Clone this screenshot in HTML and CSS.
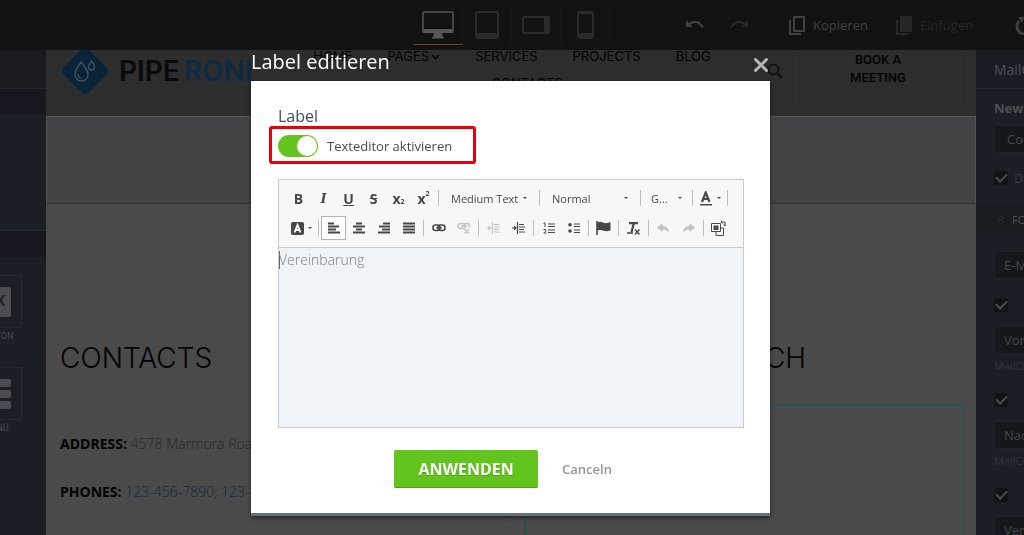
FILE: index.html
```html
<!DOCTYPE html>
<html lang="de">
<head>
    <meta charset="UTF-8">
    <meta name="viewport" content="width=device-width, initial-scale=1.0">
    <title>Label editieren</title>
    <link rel="stylesheet" href="styles.css">
</head>
<body>
    <div class="app">
        <header class="topbar">
            <div class="devices">
                <button class="device active" aria-label="Desktop">
                    <svg width="32" height="28" viewBox="0 0 32 28"><path d="M2 1h28q1 0 1 1v18q0 1-1 1H2q-1 0-1-1V2q0-1 1-1z" fill="none" stroke="currentColor" stroke-width="1.5"/><path d="M1 18h30v4H1zM12 22h8l1 4h1v1.500H10V26h1z" fill="currentColor"/></svg>
                </button>
                <button class="device" aria-label="Tablet">
                    <svg width="24" height="28" viewBox="0 0 24 28"><rect x="1" y="1" width="22" height="26" rx="2" fill="none" stroke="currentColor" stroke-width="2"/><path d="M1 22h22v5H1z" fill="currentColor"/></svg>
                </button>
                <button class="device" aria-label="Tablet quer">
                    <svg width="28" height="18" viewBox="0 0 28 18"><rect x="1" y="1" width="26" height="16" rx="1" fill="none" stroke="currentColor" stroke-width="2"/><path d="M22 1h5v16h-5z" fill="currentColor"/></svg>
                </button>
                <button class="device" aria-label="Telefon">
                    <svg width="17" height="28" viewBox="0 0 17 28"><rect x="1" y="1" width="15" height="26" rx="2" fill="none" stroke="currentColor" stroke-width="2"/><path d="M1 22h15v5H1zM1 1h15v2H1z" fill="currentColor"/></svg>
                </button>
            </div>
            <div class="history">
                <button class="history-btn" aria-label="Rückgängig">
                    <svg width="20" height="14" viewBox="0 0 20 14"><path d="M1 2v7h7L5.500 6.500Q12 2 17 10l2-1Q13-1 4 5z" fill="currentColor"/></svg>
                </button>
                <button class="history-btn off" aria-label="Wiederholen">
                    <svg width="20" height="14" viewBox="0 0 20 14"><path d="M19 2v7h-7l2.500-2.500Q8 2 3 10L1 9Q7-1 16 5z" fill="currentColor"/></svg>
                </button>
            </div>
            <button class="copy">
                <svg width="16" height="19" viewBox="0 0 16 19"><path d="M5 1h10v14H5zM1 4v14h11" fill="none" stroke="currentColor" stroke-width="2"/></svg>
                Kopieren
            </button>
            <button class="copy off">
                <svg width="16" height="19" viewBox="0 0 16 19"><path d="M4 0h12v16H4z" fill="currentColor"/><path d="M1 4v14h11" fill="none" stroke="currentColor" stroke-width="2"/></svg>
                Einfügen
            </button>
            <button class="reload" aria-label="Neu laden">
                <svg width="20" height="20" viewBox="0 0 20 20"><path d="M4 6a8 8 0 1 0 12 0" fill="none" stroke="currentColor" stroke-width="3"/><path d="M3 2l6 0-2 6z" fill="currentColor"/></svg>
            </button>
        </header>

        <aside class="left-panel">
            <div class="panel-title"></div>
            <div class="panel-band"></div>
            <div class="panel-space"></div>
            <div class="panel-band second"></div>
            <div class="tiles">
                <div class="tile">
                    <div class="tile-box"><span class="tile-ok">OK</span></div>
                    <span class="tile-name">BUTTON</span>
                </div>
                <div class="tile">
                    <div class="tile-box"><span class="tile-bars"><i></i><i></i><i></i></span></div>
                    <span class="tile-name">MENÜ</span>
                </div>
            </div>
        </aside>

        <main class="site">
            <div class="site-header">
                <a class="logo" href="#">
                    <svg width="46" height="46" viewBox="0 0 46 46"><path d="M20 1q3-2 6 0l19 19q2 3 0 6L26 45q-3 2-6 0L1 26q-2-3 0-6z" fill="#07243b"/><path d="M19 14q-6 8-6 12.500a6.500 6.500 0 0 0 13 0Q26 22 19 14zM16 26q0 4 3.500 4M29.500 13q-3 4-3 6a3 3 0 0 0 6 0q0-2-3-6z" fill="none" stroke="#4b5459" stroke-width="1.300"/></svg>
                    <span class="logo-dark">PIPE</span>
                    <span class="logo-blue">RONI</span>
                </a>
                <nav class="site-nav">
                    <a href="#">HOME</a>
                    <a href="#" class="has-menu">PAGES<svg width="9" height="6" viewBox="0 0 9 6"><path d="M1 1l3.500 3.500L8 1" fill="none" stroke="currentColor" stroke-width="1.500"/></svg></a>
                    <a href="#">SERVICES</a>
                    <a href="#">PROJECTS</a>
                    <a href="#">BLOG</a>
                    <a href="#" class="contacts-link">CONTACTS</a>
                </nav>
                <svg class="search" width="16" height="16" viewBox="0 0 16 16"><circle cx="6.500" cy="6.500" r="5" fill="none" stroke="currentColor" stroke-width="2"/><path d="M10 10l5 5" stroke="currentColor" stroke-width="2.500"/></svg>
                <a class="meeting" href="#">BOOK A<br>MEETING</a>
            </div>
            <div class="hero"></div>
            <div class="columns">
                <section class="column">
                    <div class="divider"></div>
                    <h2>CONTACTS</h2>
                    <p><b>ADDRESS:</b> 4578 Marmora Road</p>
                    <p><b>PHONES:</b> <a href="#">123-456-7890; 123-456-7891</a></p>
                </section>
                <section class="column touch">
                    <h2>GET IN TOUCH</h2>
                    <div class="form-frame"></div>
                </section>
            </div>
        </main>

        <aside class="right-panel">
            <div class="settings">
                <h3>MailChimp</h3>
                <div class="newsletter">
                    <h4>Newsletter</h4>
                    <button class="field raised">Contacts</button>
                    <label class="check"><input type="checkbox" checked>Doppelt</label>
                </div>
                <div class="fields-title"><svg width="8" height="8" viewBox="0 0 8 8"><path d="M1 4l3-3 3 3M1 7l3-3 3 3" fill="none" stroke="currentColor"/></svg>FORMULAR</div>
                <div class="fields">
                    <input class="field" type="text" value="E-Mail" aria-label="E-Mail">
                    <input class="tick" type="checkbox" checked aria-label="Vorname anzeigen">
                    <input class="field" type="text" value="Vorname" aria-label="Vorname">
                    <small>MailChimp</small>
                    <input class="tick" type="checkbox" checked aria-label="Nachname anzeigen">
                    <input class="field" type="text" value="Nachname" aria-label="Nachname">
                    <small>MailChimp</small>
                    <input class="tick" type="checkbox" checked aria-label="Label anzeigen">
                    <input class="field" type="text" value="Vereinbarung" aria-label="Vereinbarung">
                </div>
            </div>
        </aside>
    </div>

    <div class="overlay">
        <div class="modal" role="dialog" aria-labelledby="modal-title">
            <div class="modal-header">
                <h1 id="modal-title">Label editieren</h1>
                <button class="close" aria-label="Schließen">
                    <svg width="14" height="14" viewBox="0 0 14 14"><path d="M1.500 1.500l11 11M12.500 1.500l-11 11" stroke="currentColor" stroke-width="3" stroke-linecap="round"/></svg>
                </button>
            </div>
            <form class="modal-body">
                <div class="label">Label</div>
                <div class="highlight">
                    <label class="switch"><input type="checkbox" checked>Texteditor aktivieren</label>
                </div>
                <div class="editor">
                    <div class="toolbar">
                        <div class="tool-row">
                            <div class="group">
                                <button type="button" class="tool bold" aria-label="Fett">B</button>
                                <button type="button" class="tool italic" aria-label="Kursiv">I</button>
                                <button type="button" class="tool underline" aria-label="Unterstrichen">U</button>
                                <button type="button" class="tool strike" aria-label="Durchgestrichen">S</button>
                                <button type="button" class="tool script" aria-label="Tiefgestellt">x<sub>2</sub></button>
                                <button type="button" class="tool script" aria-label="Hochgestellt">x<sup>2</sup></button>
                            </div>
                            <div class="group"><span class="combo"><select aria-label="Stil"><option>Medium Text</option></select></span></div>
                            <div class="group"><span class="combo"><select aria-label="Format"><option>Normal</option></select></span></div>
                            <div class="group"><span class="combo small"><select aria-label="Größe"><option>G...</option></select></span></div>
                            <div class="group last">
                                <button type="button" class="tool color" aria-label="Textfarbe">
                                    <svg width="14" height="15" viewBox="0 0 14 15"><path d="M3 11L6.700 1.500 10.500 11M4 8h5.500" fill="none" stroke="currentColor" stroke-width="2.200"/><path d="M1 13h12v1.500H1z" fill="currentColor"/></svg>
                                </button>
                            </div>
                        </div>
                        <div class="tool-row">
                            <div class="group">
                                <button type="button" class="tool color" aria-label="Hintergrundfarbe">
                                    <svg width="13" height="13" viewBox="0 0 13 13"><rect width="13" height="13" rx="2" fill="currentColor"/><path d="M3.500 10.500L6.500 3l3 7.500M4.500 8h4" fill="none" stroke="#fff" stroke-width="1.800"/></svg>
                                </button>
                            </div>
                            <div class="group">
                                <button type="button" class="tool active" aria-label="Linksbündig"><svg width="12" height="12" viewBox="0 0 12 12"><path d="M0 1.500h6M0 4.500h11M0 7.500h8M0 10.500h12" stroke="currentColor" stroke-width="1.800"/></svg></button>
                                <button type="button" class="tool" aria-label="Zentriert"><svg width="12" height="12" viewBox="0 0 12 12"><path d="M3 1.500h6M0 4.500h12M3 7.500h6M0 10.500h12" stroke="currentColor" stroke-width="1.800"/></svg></button>
                                <button type="button" class="tool" aria-label="Rechtsbündig"><svg width="12" height="12" viewBox="0 0 12 12"><path d="M5 1.500h7M1 4.500h11M4 7.500h8M0 10.500h12" stroke="currentColor" stroke-width="1.800"/></svg></button>
                                <button type="button" class="tool" aria-label="Blocksatz"><svg width="12" height="12" viewBox="0 0 12 12"><path d="M0 1.500h12M0 4.500h12M0 7.500h12M0 10.500h12" stroke="currentColor" stroke-width="1.800"/></svg></button>
                            </div>
                            <div class="group">
                                <button type="button" class="tool" aria-label="Link"><svg width="14" height="8" viewBox="0 0 14 8"><rect x="1" y="1" width="7" height="5.500" rx="2.500" fill="none" stroke="currentColor" stroke-width="1.600"/><rect x="6" y="1" width="7" height="5.500" rx="2.500" fill="none" stroke="currentColor" stroke-width="1.600"/><path d="M4 3.800h6" stroke="currentColor" stroke-width="1.200"/></svg></button>
                                <button type="button" class="tool" disabled aria-label="Link entfernen"><svg width="14" height="12" viewBox="0 0 14 12"><rect x="1" y="1.500" width="7" height="5" rx="2.500" fill="none" stroke="currentColor" stroke-width="1.400"/><path d="M7 2q2-1 4-.5 2 1 1 4M4 4h6M7.500 7l4.500 4.500M12 7l-4.500 4.500" fill="none" stroke="currentColor" stroke-width="1.400"/></svg></button>
                            </div>
                            <div class="group">
                                <button type="button" class="tool" disabled aria-label="Einzug verkleinern"><svg width="13" height="12" viewBox="0 0 13 12"><path d="M5.500 0v12M7 2.500h5M7 5h6M7 7.500h5M7 10h6M2 6h3" stroke="currentColor"/><path d="M0 6l3-2.500v5z" fill="currentColor"/></svg></button>
                                <button type="button" class="tool" aria-label="Einzug vergrößern"><svg width="13" height="12" viewBox="0 0 13 12"><path d="M5.500 0v12M7 2.500h5M7 5h6M7 7.500h5M7 10h6M0 6h3" stroke="currentColor" stroke-width="1.200"/><path d="M5 6L2 3.500v5z" fill="currentColor"/></svg></button>
                            </div>
                            <div class="group">
                                <button type="button" class="tool" aria-label="Nummerierte Liste"><svg width="12" height="12" viewBox="0 0 12 12"><path d="M5 2h7M5 4.500h7M5 8h7M5 10.500h7" stroke="currentColor" stroke-width="1.200"/><path d="M.5 1.500L2 .8V5M.5 7.500h2.300v1.500L.8 11H3.500" fill="none" stroke="currentColor"/></svg></button>
                                <button type="button" class="tool" aria-label="Liste"><svg width="12" height="12" viewBox="0 0 12 12"><circle cx="2" cy="2.800" r="1.800" fill="currentColor"/><circle cx="2" cy="9" r="1.800" fill="currentColor"/><path d="M6 2h6M6 4.500h6M6 8h6M6 10.500h6" stroke="currentColor" stroke-width="1.200"/></svg></button>
                            </div>
                            <div class="group">
                                <button type="button" class="tool" aria-label="Anker"><svg width="15" height="14" viewBox="0 0 15 14"><path d="M1 0v14" stroke="currentColor" stroke-width="1.600"/><path d="M1 1.500q3-1.500 6 0 3 1.500 7.500-.5v8.500Q10 11 7 9.500q-3-1-6 0z" fill="currentColor"/></svg></button>
                            </div>
                            <div class="group">
                                <button type="button" class="tool" aria-label="Formatierung entfernen"><svg width="13" height="13" viewBox="0 0 13 13"><path d="M2 1.200h9M6.800 1L4.500 10.500" fill="none" stroke="currentColor" stroke-width="2.200"/><path d="M0 11h6" stroke="currentColor" stroke-width="1.500"/><path d="M8 7.500l4.500 5M12.500 7.500l-4.500 5" stroke="currentColor" stroke-width="1.500"/></svg></button>
                            </div>
                            <div class="group">
                                <button type="button" class="tool" disabled aria-label="Rückgängig"><svg width="13" height="11" viewBox="0 0 13 11"><path d="M0 4.500L5.500 0v2.800Q11 3 12.500 10 10 6.500 5.500 6.500V9z" fill="currentColor"/></svg></button>
                                <button type="button" class="tool" disabled aria-label="Wiederholen"><svg width="13" height="11" viewBox="0 0 13 11"><path d="M13 4.500L7.500 0v2.800Q2 3 .5 10 3 6.500 7.500 6.500V9z" fill="currentColor"/></svg></button>
                            </div>
                            <div class="group last">
                                <button type="button" class="tool" aria-label="Ersetzen"><svg width="15" height="15" viewBox="0 0 15 15"><path d="M.5 2.500h9v8h-9zM5 11v3.500h7.500V7H10M10 1h4v4M11.500-.5L10 1l1.500 1.500M12.500 3.500L14 5l1-1.500" fill="none" stroke="currentColor"/><path d="M2.500 4.500h5v4.500h-5z" fill="currentColor"/></svg></button>
                            </div>
                        </div>
                    </div>
                    <textarea aria-label="Label">Vereinbarung</textarea>
                </div>
                <div class="actions">
                    <button type="button" class="apply">ANWENDEN</button>
                    <button type="button" class="cancel">Canceln</button>
                </div>
            </form>
        </div>
    </div>
</body>
</html>
```
FILE: styles.css
```css
* {
    box-sizing: border-box;
}
body {
    margin: 0;
    height: 100vh;
    overflow: hidden;
    font-family: 'Open Sans', sans-serif;
    font-size: 13px;
    background-color: #4a4a4a;
}
button, input, select, textarea {
    font-family: inherit;
    margin: 0;
}
button {
    padding: 0;
    border: none;
    background: none;
    cursor: pointer;
}
a {
    color: inherit;
    text-decoration: none;
}
svg {
    display: block;
    flex: none;
}

/* Editor frame */
.app {
    display: grid;
    grid-template-columns: 46px 1fr 48px;
    grid-template-rows: 50px minmax(0, 1fr);
    height: 100vh;
}
.topbar {
    grid-column: 1 / -1;
    display: flex;
    align-items: center;
    padding-left: 414px;
    overflow: hidden;
    background-color: #101214;
    color: #3f4042;
    white-space: nowrap;
}
.devices {
    display: flex;
    margin-right: 75px;
}
.device {
    display: flex;
    align-items: center;
    justify-content: center;
    width: 49px;
    height: 40px;
    border-right: 1px solid #16181a;
    border-bottom: 1px solid #101214;
    color: #292b2d;
}
.device.active {
    color: #555658;
    border-bottom-color: #6b4a20;
}
.history {
    display: flex;
    gap: 24px;
    margin-right: 40px;
}
.history-btn, .copy, .reload {
    color: #3f4042;
}
.history-btn.off, .copy.off {
    color: #242628;
}
.copy {
    display: flex;
    align-items: center;
    gap: 8px;
    margin-right: 28px;
    font-size: 13px;
}
.reload {
    margin-left: 14px;
}

/* Left panel */
.left-panel {
    background-color: #1b1f25;
    overflow: hidden;
}
.panel-title {
    height: 39px;
    background-color: #181a20;
    border-bottom: 1px solid #24262d;
}
.panel-band {
    height: 25px;
    background-color: #17181f;
}
.panel-space {
    height: 116px;
}
.panel-band.second {
    height: 27px;
    border-top: 1px solid #25282e;
}
.tiles {
    display: flex;
    flex-direction: column;
    gap: 23px;
    margin: 18px 0 0 -30px;
    width: 52px;
}
.tile {
    display: flex;
    flex-direction: column;
    align-items: center;
}
.tile-box {
    display: flex;
    align-items: center;
    justify-content: center;
    width: 52px;
    height: 53px;
    border: 1px solid #262a30;
}
.tile-ok {
    width: 30px;
    height: 30px;
    border-radius: 2px;
    background-color: #4c4d4e;
    color: #1b1f25;
    font: bold 14px/28px Roboto, sans-serif;
    text-align: center;
}
.tile-bars {
    display: flex;
    flex-direction: column;
    gap: 3px;
    width: 30px;
}
.tile-bars i {
    height: 8px;
    border-radius: 2px;
    background-color: #4c4d4e;
}
.tile-name {
    color: #494b4f;
    font: 9px/16px Roboto, sans-serif;
}

/* Site preview */
.site {
    display: flex;
    flex-direction: column;
    overflow: hidden;
    min-width: 0;
    color: #020203;
}
.site-header {
    display: flex;
    flex: none;
    height: 66px;
    padding: 0 12px 0 16px;
    overflow: hidden;
    background-color: #2d2d2d;
}
.logo {
    display: flex;
    align-items: center;
    width: 235px;
    height: 42px;
    font: 600 28px/40px Inter, sans-serif;
}
.logo svg {
    margin-right: 11px;
}
.logo-dark {
    margin-right: 4px;
    color: #090a0c;
}
.logo-blue {
    color: #0c2a42;
}
.site-nav {
    display: flex;
    flex: 1;
    flex-wrap: wrap;
    align-content: flex-start;
    justify-content: center;
    column-gap: 35px;
    margin-top: -7px;
    font: 13px/27px Inter, sans-serif;
}
.has-menu {
    display: flex;
    align-items: center;
    gap: 2px;
}
.contacts-link {
    margin-left: 30px;
}
.search {
    margin: 13px 9px 0 40px;
    color: #111;
}
.meeting {
    width: 172px;
    height: 55px;
    padding-top: 1px;
    border: 1px solid #292929;
    border-top: none;
    font: 500 13px/18px Roboto, sans-serif;
    text-align: center;
}
.hero {
    flex: none;
    height: 88px;
    border: 1px solid #56585a;
    border-bottom-color: #303236;
    background-color: #424344;
}
.columns {
    display: grid;
    grid-template-columns: 1fr 1fr;
    flex: 1;
}
.column {
    padding: 109px 0 0 14px;
    border-right: 1px dashed #454545;
    color: #272727;
    font-size: 14px;
    font-weight: 300;
    line-height: 24px;
    white-space: nowrap;
}
.column.touch {
    padding: 138px 12px 0 14px;
    border: none;
}
.divider {
    width: 60px;
    height: 1px;
    margin-bottom: 28px;
    background-color: #454545;
}
h2 {
    margin: 0;
    color: #030303;
    font: 300 28px/32px Inter, sans-serif;
}
.touch h2 {
    margin-right: 158px;
    text-align: right;
}
.form-frame {
    height: 200px;
    margin-top: 30px;
    border: 1px solid #125557;
}
.column p {
    margin: 24px 0;
}
.column h2 + p {
    margin-top: 58px;
}
.column b {
    color: #020203;
    font-weight: 700;
}
.column p a {
    color: #13293a;
}

/* Right panel */
.right-panel {
    overflow: hidden;
    background-color: #1b1f25;
    color: #4d4f53;
}
.settings {
    width: 240px;
}
h3, h4 {
    margin: 0;
}
h3 {
    height: 39px;
    padding-left: 18px;
    border-bottom: 1px solid #23272d;
    background-color: #191c23;
    font-size: 14px;
    font-weight: 400;
    line-height: 40px;
}
.newsletter {
    display: flex;
    flex-direction: column;
    height: 117px;
    padding: 10px 18px 0;
}
h4 {
    margin-bottom: 8px;
    line-height: 18px;
    font-size: 13px;
}
.field {
    height: 28px;
    padding: 0 9px;
    border: 1px solid #202329;
    background-color: #14171b;
    color: #45474a;
    font-size: 13px;
    text-align: left;
}
.field.raised {
    padding: 0 12px;
    border-radius: 3px;
}
.check {
    display: flex;
    align-items: center;
    gap: 6px;
    margin-top: 16px;
    color: #36393d;
}
.check input, .tick {
    appearance: none;
    display: flex;
    align-items: center;
    justify-content: center;
    width: 14px;
    height: 14px;
    border-radius: 2px;
    background-color: #101318;
}
.check input::before, .tick::before {
    content: '';
    width: 9px;
    height: 5px;
    margin-bottom: 3px;
    border: solid #4c4e50;
    border-width: 0 0 2px 2px;
    transform: rotate(-45deg);
}
.fields-title {
    display: flex;
    align-items: center;
    gap: 7px;
    height: 26px;
    padding-left: 21px;
    background-color: #181b20;
    font-size: 11px;
}
.fields-title svg {
    color: #303338;
}
.fields {
    display: flex;
    flex-direction: column;
    padding: 19px 18px 0;
}
.fields .tick {
    margin: 19px 0 14px;
}
.fields small {
    height: 20px;
    color: #303338;
    font-size: 11px;
    line-height: 24px;
}

/* Modal */
.overlay {
    position: fixed;
    inset: 0;
    padding: 42px 3px 0 0;
}
.modal {
    width: 519px;
    max-width: 100%;
    margin: 0 auto;
}
.modal-header {
    display: flex;
    align-items: center;
    justify-content: space-between;
    height: 39px;
    color: #fff;
}
h1 {
    margin: 0;
    font-size: 20px;
    font-weight: 400;
}
.close {
    margin-top: 7px;
    padding-right: 2px;
    color: #b5b5b5;
}
.modal-body {
    padding: 24px 26px 25px 27px;
    border-bottom: 3px solid #68717c;
    background-color: #fff;
    box-shadow: 0 2px 4px rgba(0, 0, 0, 0.5);
    color: #454c55;
}
.label {
    font-size: 16px;
    line-height: 22px;
}
.highlight {
    width: 207px;
    margin: -1px 0 15px -9px;
    padding: 6px 6px 4px;
    border: 3px solid #e8000b;
    border-radius: 3px;
}
.switch {
    display: flex;
    align-items: center;
    gap: 9px;
    white-space: nowrap;
}
.switch input {
    appearance: none;
    width: 40px;
    height: 22px;
    padding: 1px;
    border-radius: 11px;
    background-color: #64c41f;
}
.switch input::before {
    content: '';
    display: block;
    width: 20px;
    height: 20px;
    margin-left: auto;
    border-radius: 50%;
    background-color: #fff;
}
.editor {
    border: 1px solid #c9cdd1;
}
.toolbar {
    display: flex;
    flex-direction: column;
    gap: 6px;
    padding: 6px 7px 7px;
    border-bottom: 1px solid #c9cdd1;
    background-color: #f7f7f7;
}
.tool-row {
    display: flex;
    height: 24px;
}
.group {
    display: flex;
    align-items: center;
}
.group::after {
    content: '';
    width: 1px;
    height: 16px;
    margin: 0 2px;
    background-color: #bcbcbc;
}
.tool-row:last-child .last::after {
    display: none;
}
.tool {
    display: flex;
    align-items: center;
    justify-content: center;
    width: 25px;
    height: 24px;
    color: #484848;
    font-size: 14px;
    font-weight: 700;
}
.tool:disabled {
    color: #c2c2c2;
}
.tool.active {
    border: 1px solid #b4b4b4;
    background-color: #fff;
}
.italic {
    font-family: 'DejaVu Serif', serif;
    font-style: italic;
    font-size: 13px;
}
.underline {
    text-decoration: underline;
}
.strike {
    text-decoration: line-through;
}
.script sub, .script sup {
    font-size: 7px;
    line-height: 8px;
}
.script sub {
    margin-top: 8px;
}
.script sup {
    margin-bottom: 8px;
}
.tool.color {
    gap: 4px;
    width: 30px;
}
.tool.color::after, .combo::after {
    content: '';
    border: solid transparent;
    border-width: 2px 2px 0;
    border-top-color: #484848;
}
.combo {
    display: flex;
    align-items: center;
    width: 96px;
    padding: 0 10px;
}
.combo.small {
    width: 47px;
    padding: 0 8px;
}
.combo select {
    appearance: none;
    flex: 1;
    min-width: 0;
    padding: 0;
    border: none;
    background: none;
    color: #484848;
    font-size: 11px;
}
textarea {
    display: block;
    width: 100%;
    height: 179px;
    padding: 2px 0;
    border: none;
    resize: none;
    background: linear-gradient(#666, #666) 0 3px / 1px 18px no-repeat #eff3f7;
    color: #7d8083;
    font-size: 14px;
    font-weight: 300;
    line-height: 20px;
}
.actions {
    display: flex;
    align-items: center;
    justify-content: center;
    gap: 24px;
    margin-top: 22px;
    padding-right: 16px;
}
.apply {
    width: 144px;
    height: 38px;
    border-bottom: 1px solid #4d9c14;
    border-radius: 2px;
    background-color: #64c41f;
    color: #fff;
    font-size: 16px;
    font-weight: 700;
    text-shadow: 0 1px 1px rgba(0, 0, 0, 0.2);
}
.cancel {
    color: #91969c;
    font-size: 13px;
    font-weight: 600;
}
```
